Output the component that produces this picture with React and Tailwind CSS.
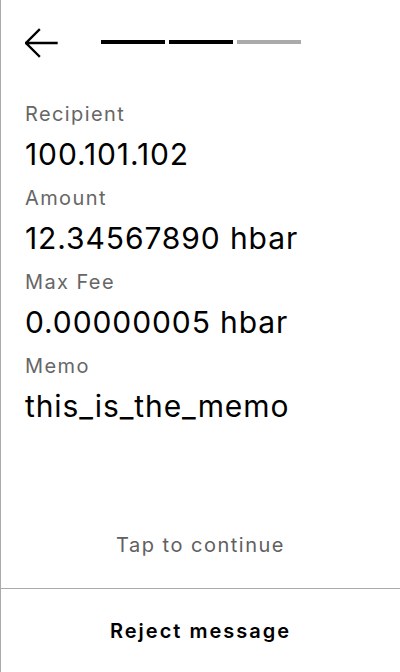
import React from "react";

const fields = [
  { label: "Recipient", value: "100.101.102" },
  { label: "Amount", value: "12.34567890 hbar" },
  { label: "Max Fee", value: "0.00000005 hbar" },
  { label: "Memo", value: "this_is_the_memo" },
];

const BackArrow = () => (
  <svg width="33" height="30" viewBox="0 0 33 30" fill="none">
    <path
      d="M14 2 L1 15 L14 28 M1 15 H31.5"
      stroke="black"
      strokeWidth="2.4"
      strokeLinecap="square"
    />
  </svg>
);

const App = () => {
  const step = 2;

  return (
    <div className="flex h-[672px] w-[400px] flex-col border-l border-[#aaaaaa] bg-white font-['Inter',sans-serif]">
      {/* header */}
      <div className="flex h-[86px] items-center pl-6">
        <button className="flex items-center">
          <BackArrow />
        </button>
        <div className="mb-[2px] ml-[43px] flex gap-1">
          {[0, 1, 2].map((i) => (
            <div
              key={i}
              className={
                i < step ? "h-1 w-16 bg-black" : "h-1 w-16 bg-[#aaaaaa]"
              }
            />
          ))}
        </div>
      </div>

      {/* details */}
      <div className="mt-2 flex flex-col pl-6">
        {fields.map((f) => (
          <div key={f.label} className="mb-1">
            <div className="text-[20px] leading-[40px] tracking-[0.07em] text-[#666666]">
              {f.label}
            </div>
            <div className="text-[30px] leading-[40px] tracking-[0.03em] text-black">
              {f.value}
            </div>
          </div>
        ))}
      </div>

      <div className="flex-1" />

      <div className="pb-[29px] text-center text-[20px] leading-7 tracking-[0.075em] text-[#606060]">
        Tap to continue
      </div>

      <button className="flex h-[84px] items-center justify-center border-t border-[#aaaaaa] text-[20px] font-semibold tracking-[0.1em] text-black">
        Reject message
      </button>
    </div>
  );
};

export default App;
